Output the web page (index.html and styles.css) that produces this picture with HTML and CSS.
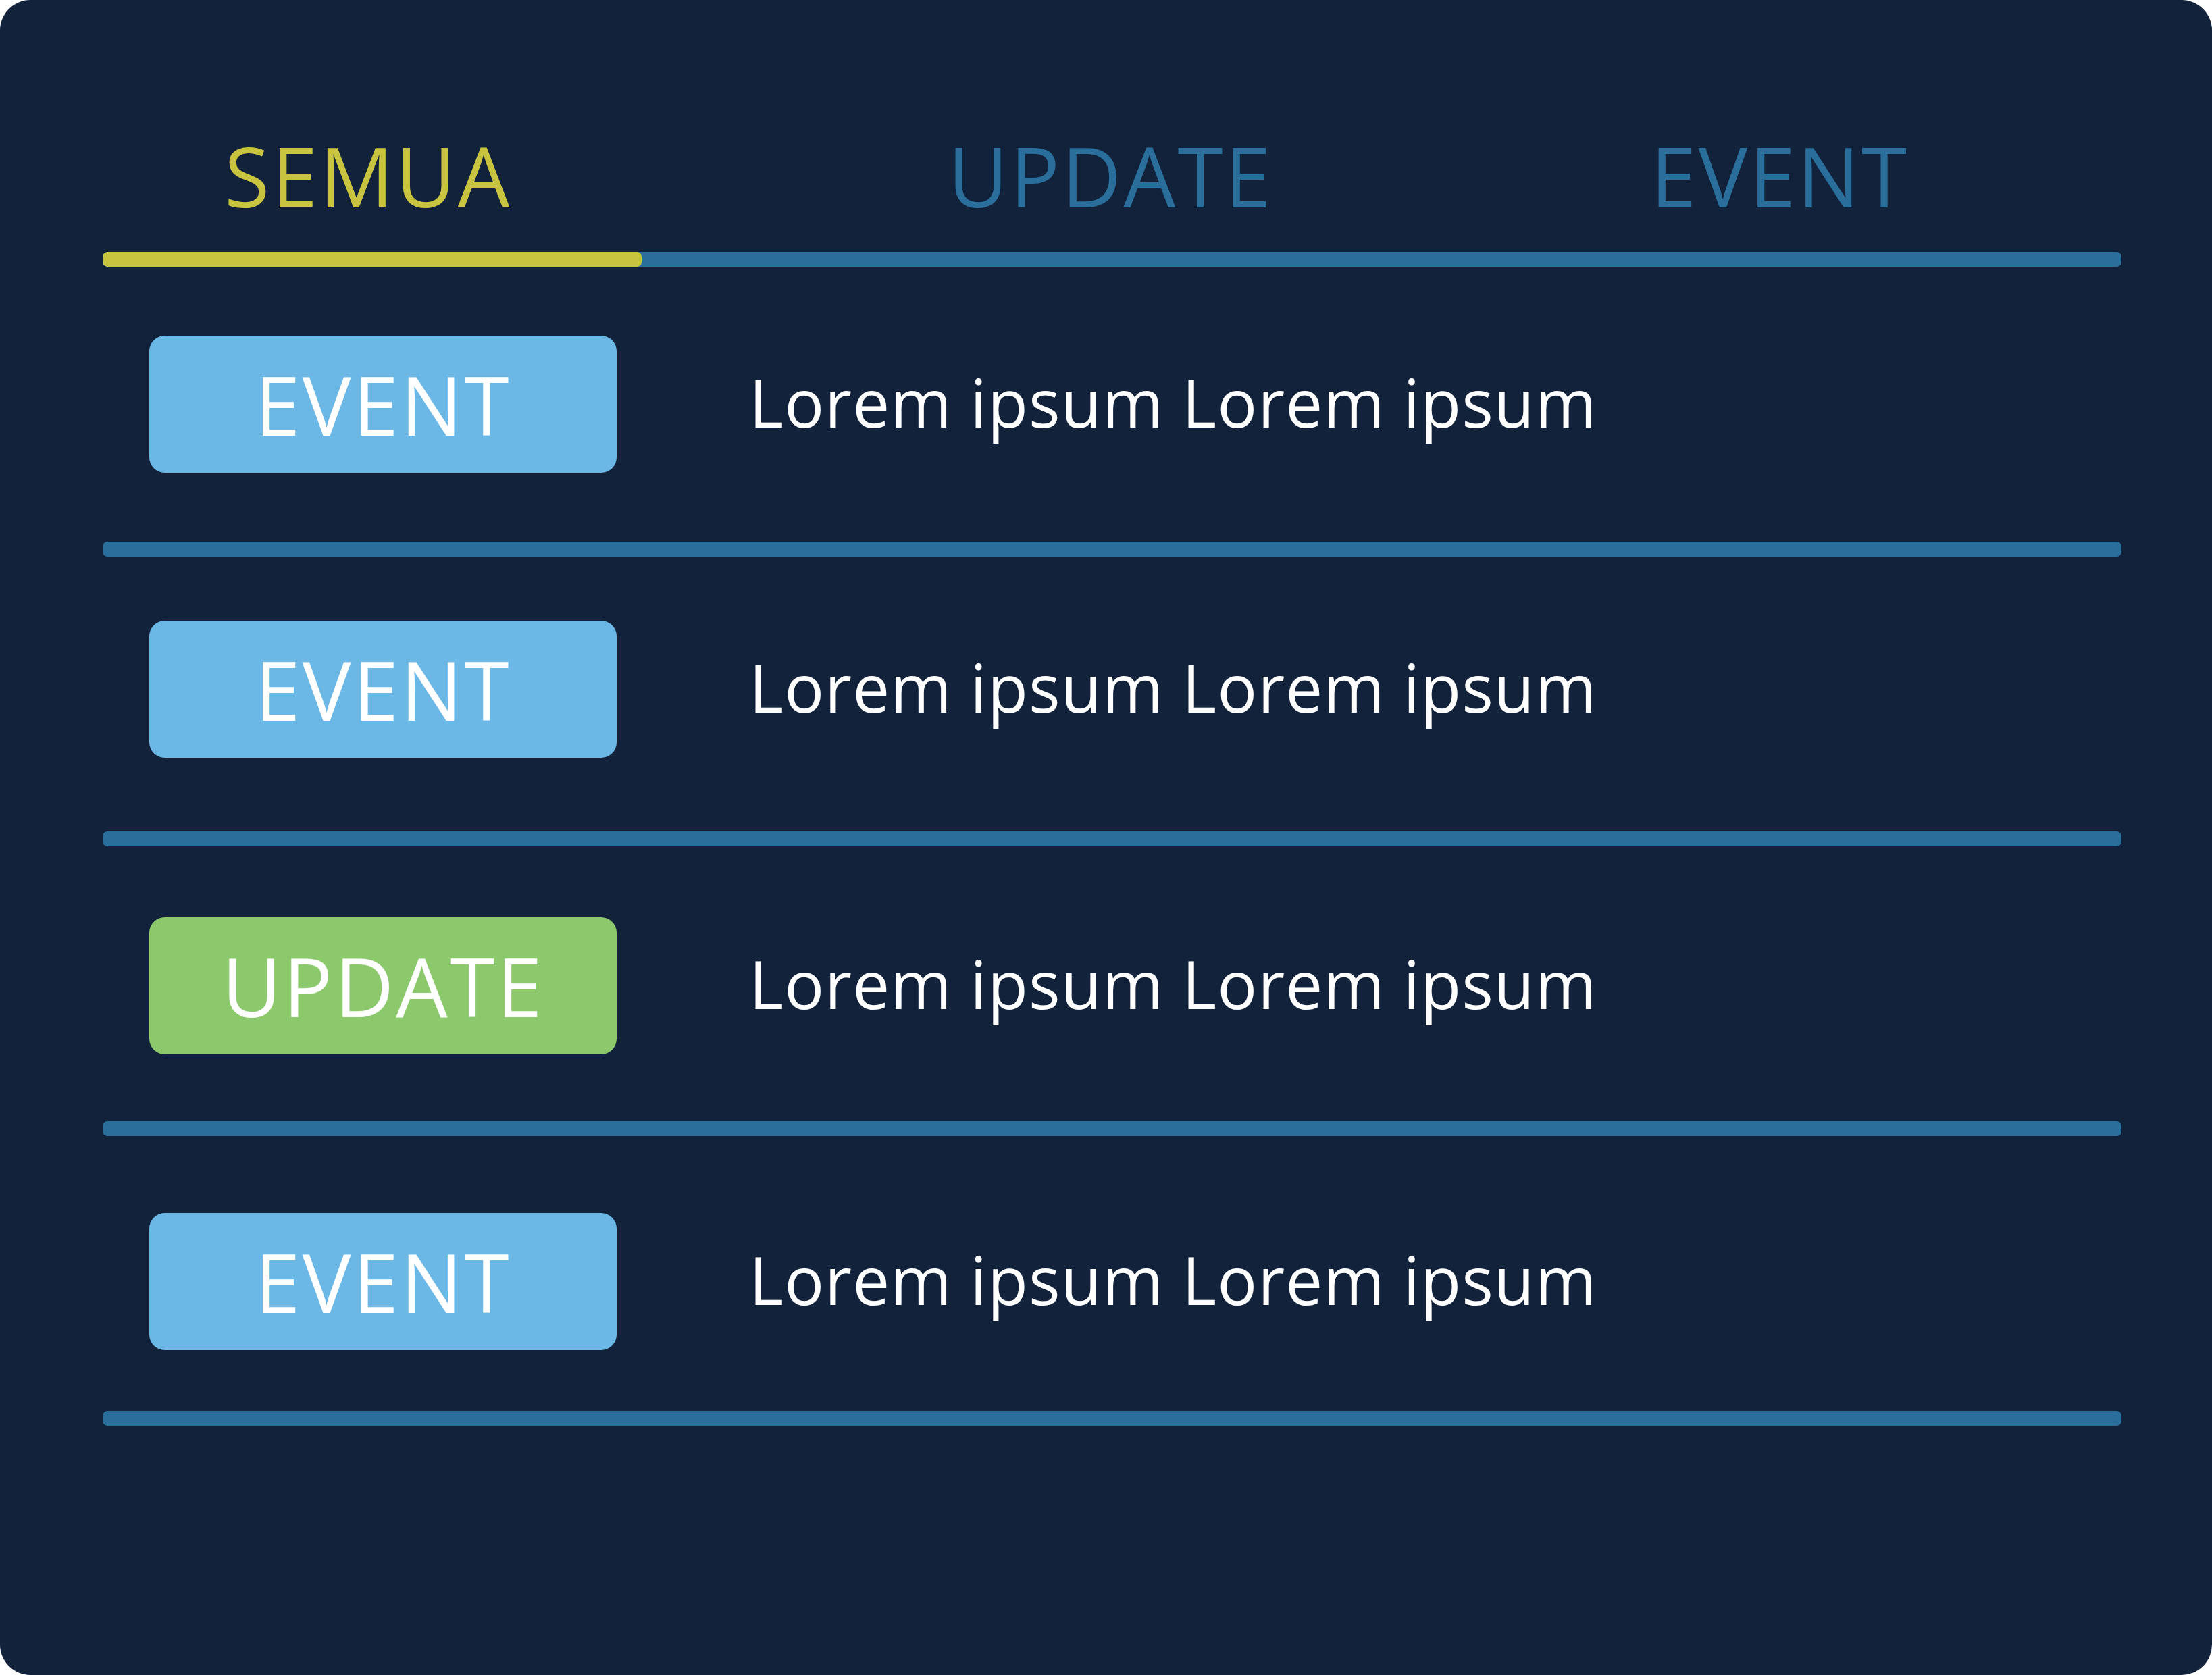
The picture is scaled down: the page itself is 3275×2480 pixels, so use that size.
FILE: index.html
```html
<!DOCTYPE html>
<html lang="id">
<head>
<meta charset="utf-8">
<title>Semua / Update / Event</title>
<link rel="stylesheet" href="styles.css">
</head>
<body>
<div class="card">
  <nav class="tabs">
    <div class="tab tab--active">SEMUA</div>
    <div class="tab">UPDATE</div>
    <div class="tab">EVENT</div>
  </nav>
  <div class="tabbar"><div class="tabbar__active"></div></div>

  <div class="row row--1">
    <span class="badge badge--event">EVENT</span>
    <span class="row__text">Lorem ipsum Lorem ipsum</span>
  </div>
  <div class="divider"></div>

  <div class="row row--2">
    <span class="badge badge--event">EVENT</span>
    <span class="row__text">Lorem ipsum Lorem ipsum</span>
  </div>
  <div class="divider"></div>

  <div class="row row--3">
    <span class="badge badge--update">UPDATE</span>
    <span class="row__text">Lorem ipsum Lorem ipsum</span>
  </div>
  <div class="divider"></div>

  <div class="row row--4">
    <span class="badge badge--event">EVENT</span>
    <span class="row__text">Lorem ipsum Lorem ipsum</span>
  </div>
  <div class="divider"></div>
</div>
</body>
</html>
```
FILE: styles.css
```css
html, body {
  margin: 0;
  padding: 0;
  background: #ffffff;
}

.card {
  box-sizing: border-box;
  width: 3275px;
  height: 2480px;
  background: #11223a;
  border-radius: 45px;
  padding: 199px 134px 0 152px;
  font-family: "Open Sans", "Noto Sans", sans-serif;
  overflow: hidden;
}

.tabs {
  display: grid;
  grid-template-columns: 786px 1412px 570px;
}

.tab {
  font-size: 122px;
  line-height: 122px;
  text-align: center;
  color: #2a6e9b;
  white-space: nowrap;
  letter-spacing: 3px;
}

.tab--active {
  color: #c9c440;
}

.tabbar {
  margin-top: 52px;
  height: 22px;
  border-radius: 7px;
  background: #2a6e9b;
  overflow: hidden;
}

.tabbar__active {
  width: 798px;
  height: 100%;
  border-radius: 7px;
  background: #c9c440;
}

.row {
  box-sizing: border-box;
  height: 407px;
  display: flex;
  align-items: center;
  padding-left: 69px;
}

.row--2 { padding-bottom: 14px; }
.row--3 { padding-top: 6px; }
.row--4 { padding-top: 24px; }

.badge {
  flex: none;
  width: 692px;
  height: 203px;
  border-radius: 23px;
  display: flex;
  align-items: center;
  justify-content: center;
  color: #ffffff;
  font-size: 121px;
  line-height: 1;
  letter-spacing: 3px;
}

.badge--event { background: #6bb8e6; }
.badge--update { background: #8cc96c; }

.row__text {
  margin-left: 196px;
  padding-bottom: 8px;
  color: #ffffff;
  font-size: 98px;
  line-height: 1;
  letter-spacing: 1px;
  white-space: nowrap;
}

.divider {
  height: 22px;
  border-radius: 7px;
  background: #2a6e9b;
}
```
